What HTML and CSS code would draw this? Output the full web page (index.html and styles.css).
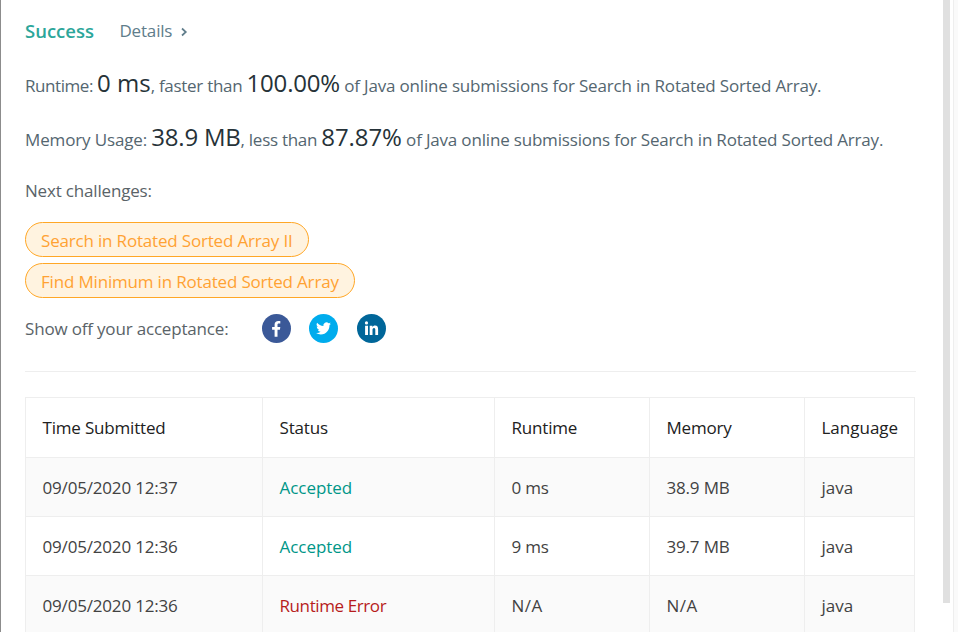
FILE: index.html
```
<!DOCTYPE html>
<html lang="en">
<head>
<meta charset="utf-8">
<title>Submission Result</title>
<link rel="stylesheet" href="styles.css">
</head>
<body>
<div class="app">
<main class="panel">
  <header class="result"><strong class="success">Success</strong><a class="details">Details</a><svg class="chevron" width="8" height="10" viewBox="0 0 8 10"><path d="M2 1.5L5.8 5 2 8.5"/></svg></header>
  <p class="stat"><span class="label-runtime">Runtime: </span><span class="big runtime">0 ms</span><span class="compare">, faster than </span><span class="big percent">100.00%</span><span> of Java online submissions for Search in Rotated Sorted Array.</span></p>
  <p class="stat"><span class="label-memory">Memory Usage: </span><span class="big memory">38.9 MB</span><span class="compare">, less than </span><span class="big percentile">87.87%</span><span> of Java online submissions for Search in Rotated Sorted Array.</span></p>
  <p class="next">Next challenges:</p>
  <div class="challenges">
    <a class="pill">Search in Rotated Sorted Array II</a>
    <a class="pill">Find Minimum in Rotated Sorted Array</a>
  </div>
  <div class="share"><span class="share-label">Show off your acceptance:</span>
    <svg class="social facebook" viewBox="0 0 29 29"><circle cx="14.5" cy="14.5" r="14.5" fill="#3b5998"/><path fill="#fff" d="M12.6 22.8v-7.1h-2.5v-2.8h2.5v-2.3c0-2.4 1.5-3.7 3.7-3.7 1 0 1.7.1 2 .1v2.5h-1.4c-1.2 0-1.4.6-1.4 1.4v2h2.8l-.4 2.8h-2.4v7.1z"/></svg>
    <svg class="social" viewBox="0 0 29 29"><circle cx="14.5" cy="14.5" r="14.5" fill="#00aced"/><path fill="#fff" transform="translate(7.1 6.9) scale(.62)" d="M23.95 4.57a10 10 0 0 1-2.82.77 4.96 4.96 0 0 0 2.16-2.72c-.95.55-2 .95-3.13 1.18a4.92 4.92 0 0 0-8.38 4.48C7.69 8.1 4.07 6.13 1.64 3.16a4.92 4.92 0 0 0 1.52 6.57 4.9 4.9 0 0 1-2.23-.61v.06a4.92 4.92 0 0 0 3.95 4.83 5 5 0 0 1-2.21.08 4.94 4.94 0 0 0 4.6 3.42A9.87 9.87 0 0 1 0 19.54a13.99 13.99 0 0 0 7.55 2.21c9.05 0 14-7.5 14-13.98 0-.21 0-.42-.02-.63a9.94 9.94 0 0 0 2.46-2.55z"/></svg>
    <svg class="social" viewBox="0 0 29 29"><circle cx="14.5" cy="14.5" r="14.5" fill="#006699"/><path fill="#fff" d="M8.1 11.8h2.9V21H8.1zM12.7 11.8h2.7v1.3c.5-.9 1.5-1.5 2.7-1.5 2.4 0 3 1.5 3 3.9V21h-2.8v-4.9c0-1.2-.1-2.2-1.3-2.2s-1.5 1-1.5 2.2V21h-2.8z"/><circle cx="9.5" cy="8.9" r="1.6" fill="#fff"/></svg>
  </div>
  <hr class="rule">
  <table class="history">
    <colgroup><col class="col-time"><col class="col-status"><col class="col-metric"><col class="col-metric"><col class="col-language"></colgroup>
    <thead><tr><th>Time Submitted</th><th>Status</th><th>Runtime</th><th>Memory</th><th class="lang">Language</th></tr></thead>
    <tbody>
      <tr><td>09/05/2020 12:37</td><td class="ok">Accepted</td><td>0 ms</td><td>38.9 MB</td><td class="lang">java</td></tr>
      <tr><td>09/05/2020 12:36</td><td class="ok">Accepted</td><td>9 ms</td><td>39.7 MB</td><td class="lang">java</td></tr>
      <tr><td>09/05/2020 12:36</td><td class="err">Runtime Error</td><td class="na">N/A</td><td class="na">N/A</td><td class="lang">java</td></tr>
    </tbody>
  </table>
</main>
<div class="scroll"><div class="thumb"></div></div>
<aside class="gutter"></aside>
</div>
</body>
</html>
```
FILE: styles.css
```
* { box-sizing: border-box; }
body { margin: 0; background: #fff; font-family: "Open Sans", "Noto Sans", sans-serif; font-size: 17px; font-weight: 400; letter-spacing: -0.18px; color: #546670; }
p { margin: 0; }
.app { display: flex; height: 632px; overflow: hidden; border-left: 1px solid #8c8c8c; }
.panel { width: 942px; flex: none; padding: 0 27px 0 24px; }
.result { display: flex; align-items: center; height: 60px; }
.success { color: #2ca69a; font-weight: 600; font-size: 18.5px; letter-spacing: 0; }
.details { margin-left: 25.5px; color: #607d8b; }
.chevron { margin: 4px 0 0 8px; fill: none; stroke: #607d8b; stroke-width: 1.7; }
.stat { white-space: pre; height: 54px; line-height: 46px; }
.label-runtime { letter-spacing: -0.43px; }
.label-memory { letter-spacing: -0.14px; }
.compare { letter-spacing: -0.28px; }
.big { font-size: 24px; color: #263238; }
.runtime { letter-spacing: 0; }
.memory { letter-spacing: -0.22px; }
.percentile { letter-spacing: -0.08px; }
.next { height: 54px; line-height: 45px; color: #5a6368; }
.challenges { display: flex; flex-direction: column; align-items: flex-start; gap: 6px; }
.pill { height: 35px; border: 1px solid #ffa726; border-radius: 18px; background: #fff3e0; color: #ffa233; padding: 0 15px; line-height: 35px; }
.share { display: flex; align-items: center; height: 61px; color: #5a6368; }
.share-label { width: 237px; }
.social { width: 29px; height: 29px; margin-right: 19px; }
.facebook { margin-right: 18px; }
.rule { border: 0; height: 1px; background: #eee; margin: 12px 0 25px; }
.history { table-layout: fixed; border-collapse: collapse; width: 890px; color: #424242; }
.col-time { width: 237px; }
.col-status { width: 232px; }
.col-metric { width: 155px; }
.col-language { width: 110px; }
th, td { border: 1px solid #eee; padding: 0 12px 0 16.5px; height: 59px; text-align: left; font-weight: 400; }
th { height: 60px; color: #212121; }
tbody tr:nth-child(odd) { background: #fafafa; }
.lang { letter-spacing: 0; }
.ok { color: #009688; letter-spacing: -0.05px; }
.err { color: #b71c1c; letter-spacing: -0.4px; }
.na { letter-spacing: 0.5px; }
.scroll { width: 7px; flex: none; }
.thumb { height: 603px; background: #e0e0e0; }
.gutter { margin-left: 3px; flex: 1; border-left: 1px solid #eee; background: #fafafa; }
```
